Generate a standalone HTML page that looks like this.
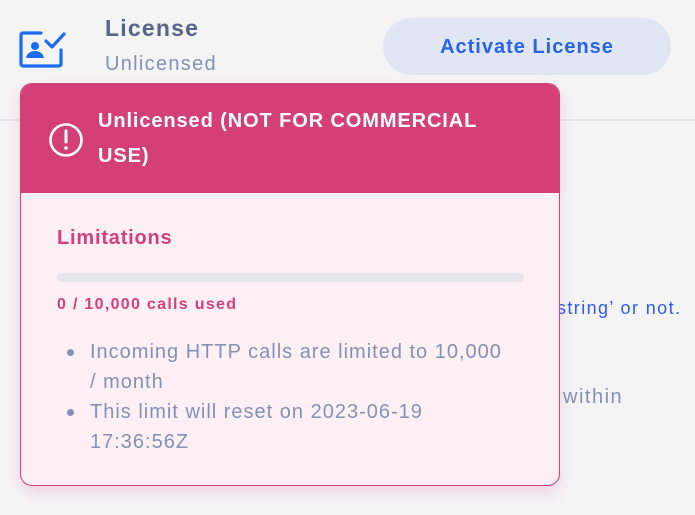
<!DOCTYPE html>
<html><head><style>
*{margin:0;padding:0;box-sizing:border-box}
body{width:695px;height:515px;background:#f4f4f5;font-family:"Liberation Sans",sans-serif;position:relative;overflow:hidden}
.abs{position:absolute;white-space:nowrap}
</style></head><body>
<div class="abs" style="left:0;top:119px;width:695px;height:2px;background:#e4e4e7"></div>
<svg class="abs" style="left:19px;top:31px" width="50" height="38" viewBox="0 0 50 38">
<path d="M22 2H4a2 2 0 0 0-2 2v29a2 2 0 0 0 2 2h36a2 2 0 0 0 2-2V19" fill="none" stroke="#1a6cf5" stroke-width="3.2" stroke-linecap="round"/>
<path d="M27 10l6 6 12-13" fill="none" stroke="#1a6cf5" stroke-width="3.2" stroke-linecap="round" stroke-linejoin="round"/>
<circle cx="16" cy="15" r="4" fill="#1a6cf5"/>
<path d="M7 27c1-5 5-7 9-7s8 2 9 7z" fill="#1a6cf5"/>
</svg>
<div class="abs" style="left:105px;top:15px;font-size:23px;font-weight:bold;color:#56648a;letter-spacing:1.2px">License</div>
<div class="abs" style="left:105px;top:53px;font-size:20px;color:#8391b4;letter-spacing:1.3px">Unlicensed</div>
<div class="abs" style="left:383px;top:18px;width:288px;height:57px;border-radius:29px;background:#e1e6f4;color:#2563eb;font-weight:bold;font-size:20px;text-align:center;line-height:59px;letter-spacing:1px">Activate License</div>
<div class="abs" style="left:557px;top:298px;font-size:18px;color:#2f5bea;letter-spacing:1.4px">string’ or not.</div>
<div class="abs" style="left:563px;top:386px;font-size:20px;color:#8391b4;letter-spacing:1.5px">within</div>
<div class="abs" style="left:20px;top:83px;width:540px;height:403px;border-radius:12px;border:1px solid #d63f78;background:#fcf0f4;overflow:hidden;box-shadow:0 6px 14px rgba(214,63,120,0.18)">
<div style="height:109px;background:#d43f78;position:relative">
<svg class="abs" style="left:27px;top:38px" width="36" height="36" viewBox="0 0 36 36"><circle cx="18" cy="18" r="15.5" fill="none" stroke="#fff" stroke-width="2.6"/><path d="M18 9v11" stroke="#fff" stroke-width="3" stroke-linecap="round"/><circle cx="18" cy="26" r="1.8" fill="#fff"/></svg>
<div class="abs" style="left:77px;top:20px;font-size:20px;font-weight:bold;color:#fff;line-height:35px;letter-spacing:0.9px">Unlicensed (NOT FOR COMMERCIAL<br>USE)</div>
</div>
<div class="abs" style="left:36px;top:143px;font-size:20px;font-weight:bold;color:#d63f78;letter-spacing:0.8px">Limitations</div>
<div class="abs" style="left:36px;top:189px;width:467px;height:9px;border-radius:5px;background:#e5e6ea"></div>
<div class="abs" style="left:36px;top:212px;font-size:16px;font-weight:bold;color:#d63f78;letter-spacing:1.3px">0 / 10,000 calls used</div>
<div class="abs" style="left:69px;top:253px;font-size:20px;color:#8391b4;line-height:30px;letter-spacing:1px">Incoming HTTP calls are limited to 10,000<br>/ month<br>This limit will reset on 2023-06-19<br>17:36:56Z</div>
<div class="abs" style="left:46px;top:265px;width:7px;height:7px;border-radius:50%;background:#8391b4"></div>
<div class="abs" style="left:46px;top:325px;width:7px;height:7px;border-radius:50%;background:#8391b4"></div>
</div>
</body></html>
